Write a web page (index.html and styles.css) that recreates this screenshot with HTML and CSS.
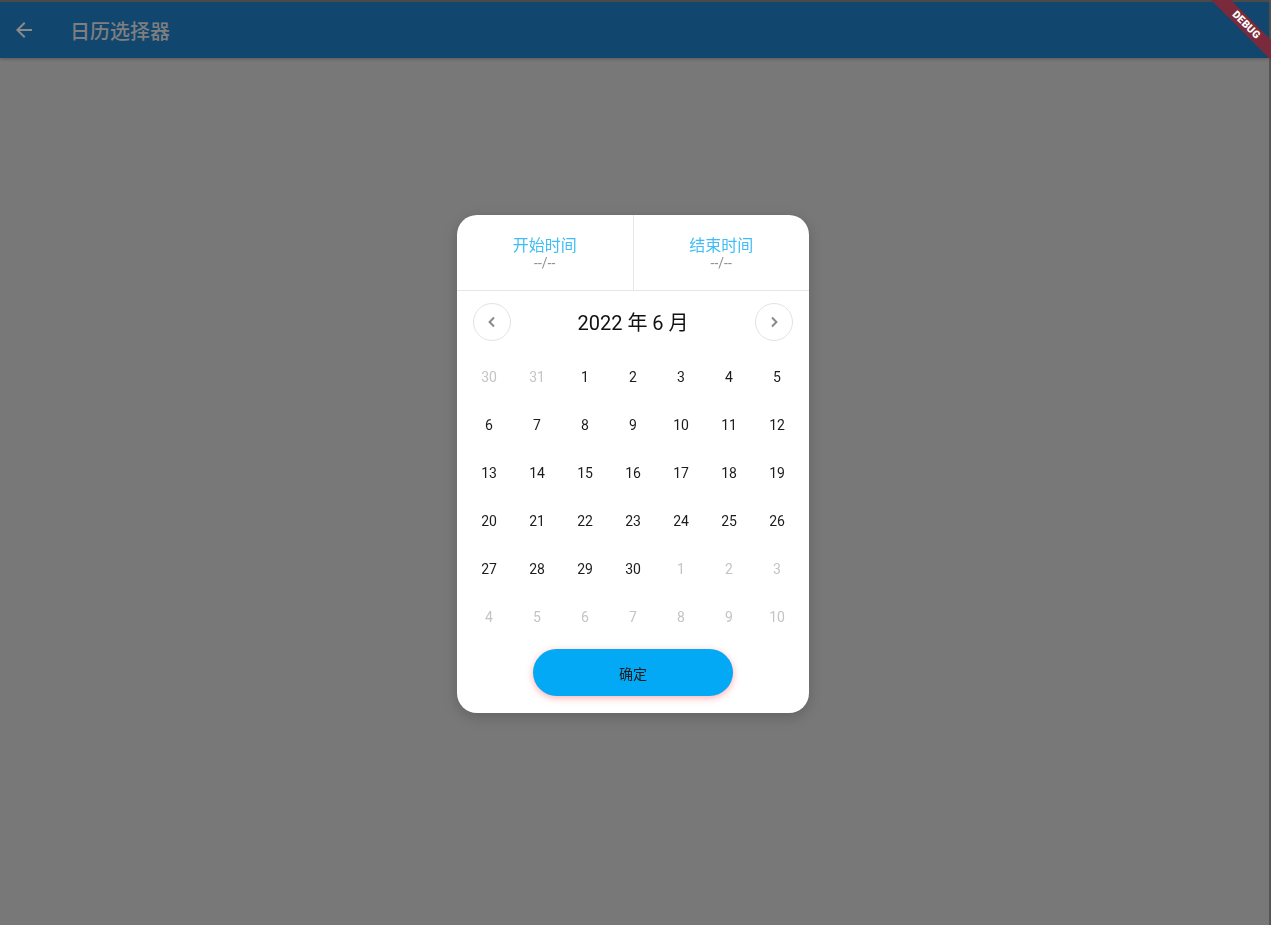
FILE: index.html
```html
<!DOCTYPE html>
<html lang="zh">
<head>
<meta charset="utf-8">
<title>日历选择器</title>
<link rel="stylesheet" href="styles.css">
</head>
<body>
<div class="app">
  <header class="appbar">
    <svg class="back" viewBox="0 0 24 24" width="24" height="24"><path d="M20 11H7.83l5.59-5.59L12 4l-8 8 8 8 1.41-1.41L7.83 13H20v-2z" fill="currentColor"/></svg>
    <h1 class="title">日历选择器</h1>
  </header>
  <main class="content"></main>
</div>

<div class="banner-wrap"><div class="banner">DEBUG</div></div>

<div class="overlay">
  <div class="dialog">
    <div class="range">
      <div class="range-col">
        <div class="range-title">开始时间</div>
        <div class="range-value">--/--</div>
      </div>
      <div class="range-col">
        <div class="range-title">结束时间</div>
        <div class="range-value">--/--</div>
      </div>
    </div>
    <div class="month-row">
      <button class="nav"><svg viewBox="0 0 10 12" width="10" height="12"><path d="M7 1.5 2.6 6 7 10.5" fill="none" stroke="currentColor" stroke-width="2"/></svg></button>
      <div class="month-title">2022 年 6 月</div>
      <button class="nav"><svg viewBox="0 0 10 12" width="10" height="12"><path d="M3 1.5 7.4 6 3 10.5" fill="none" stroke="currentColor" stroke-width="2"/></svg></button>
    </div>
    <div class="grid">
      <span class="day other">30</span><span class="day other">31</span><span class="day">1</span><span class="day">2</span><span class="day">3</span><span class="day">4</span><span class="day">5</span>
      <span class="day">6</span><span class="day">7</span><span class="day">8</span><span class="day">9</span><span class="day">10</span><span class="day">11</span><span class="day">12</span>
      <span class="day">13</span><span class="day">14</span><span class="day">15</span><span class="day">16</span><span class="day">17</span><span class="day">18</span><span class="day">19</span>
      <span class="day">20</span><span class="day">21</span><span class="day">22</span><span class="day">23</span><span class="day">24</span><span class="day">25</span><span class="day">26</span>
      <span class="day">27</span><span class="day">28</span><span class="day">29</span><span class="day">30</span><span class="day other">1</span><span class="day other">2</span><span class="day other">3</span>
      <span class="day other">4</span><span class="day other">5</span><span class="day other">6</span><span class="day other">7</span><span class="day other">8</span><span class="day other">9</span><span class="day other">10</span>
    </div>
    <div class="actions">
      <button class="confirm">确定</button>
    </div>
  </div>
</div>
</body>
</html>
```

FILE: styles.css
```css
* { box-sizing: border-box; }
html, body {
  margin: 0;
  padding: 0;
  width: 100%;
  height: 100%;
  overflow: hidden;
}
body {
  font-family: Roboto, "Noto Sans CJK SC", sans-serif;
  background: #787878;
}
.app {
  display: flex;
  flex-direction: column;
  height: 100%;
  border-right: 2px solid #555;
}
.appbar {
  height: 58px;
  flex: none;
  display: flex;
  align-items: center;
  background: #11466f;
  border-top: 2px solid #4a4a4a;
  padding-left: 12px;
  box-shadow: 0 1px 3px rgba(0,0,0,0.25);
}
.back {
  color: #8a8a8a;
  display: block;
}
.title {
  margin: 0 0 0 34px;
  font-size: 20px;
  font-weight: 500;
  color: #7f7f7f;
  font-family: "Noto Sans CJK SC", sans-serif;
}
.content { flex: 1; }

.banner-wrap {
  position: fixed;
  top: 0;
  right: 0;
  width: 70px;
  height: 70px;
  overflow: hidden;
  pointer-events: none;
}
.banner {
  position: absolute;
  left: -15.5px;
  top: 17.5px;
  width: 120px;
  height: 14px;
  transform: rotate(45deg);
  background: #7a2a3a;
  color: #fff;
  font-family: Roboto, sans-serif;
  font-weight: 900;
  font-size: 10.5px;
  line-height: 14px;
  text-align: center;
  letter-spacing: 0.2px;
}

.overlay {
  position: fixed;
  inset: 0;
  display: flex;
  align-items: center;
  justify-content: center;
  padding: 3px 5px 0 0;
}
.dialog {
  width: 352px;
  background: #fff;
  border-radius: 20px;
  box-shadow: 0 4px 14px rgba(0,0,0,0.18);
  overflow: hidden;
  padding-bottom: 17px;
}
.range {
  display: flex;
  height: 76px;
  border-bottom: 1px solid #e6e6e6;
}
.range-col {
  flex: 1;
  display: flex;
  flex-direction: column;
  align-items: center;
  justify-content: center;
}
.range-col + .range-col { border-left: 1px solid #e6e6e6; }
.range-title {
  font-family: "Noto Sans CJK SC", sans-serif;
  font-size: 16px;
  line-height: 20px;
  color: #3fbdf4;
}
.range-value {
  font-size: 14px;
  line-height: 18px;
  color: #8f8f8f;
}
.month-row {
  height: 62px;
  display: flex;
  align-items: center;
  justify-content: space-between;
  padding: 0 16px;
}
.nav {
  width: 38px;
  height: 38px;
  border-radius: 50%;
  border: 1px solid #e2e2e2;
  background: #fff;
  color: #8a8a8a;
  display: flex;
  align-items: center;
  justify-content: center;
  padding: 0;
}
.nav svg { display: block; }
.month-title {
  font-family: Roboto, "Noto Sans CJK SC", sans-serif;
  font-size: 20px;
  color: #111;
  margin-top: -2px;
}
.grid {
  display: grid;
  grid-template-columns: repeat(7, 48px);
  grid-auto-rows: 48px;
  padding: 0 8px;
}
.day {
  display: flex;
  align-items: center;
  justify-content: center;
  font-size: 14px;
  color: #1c1c1c;
}
.day.other { color: #c4c4c4; }
.actions {
  display: flex;
  justify-content: center;
  padding-top: 8px;
}
.confirm {
  width: 200px;
  height: 47px;
  border: none;
  border-radius: 24px;
  background: #03a9f4;
  color: #1a1a1a;
  font-family: "Noto Sans CJK SC", sans-serif;
  font-size: 14px;
  box-shadow: 0 2px 7px rgba(255, 110, 110, 0.55);
}
```
